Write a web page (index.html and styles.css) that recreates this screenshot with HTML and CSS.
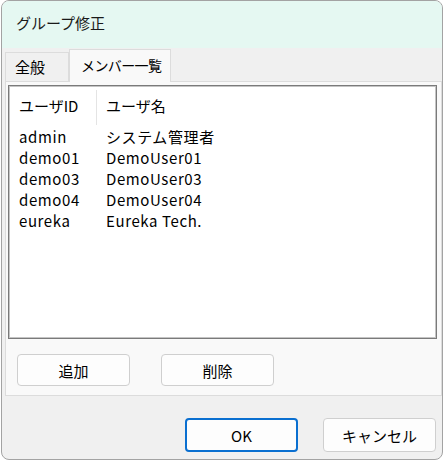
FILE: index.html
```html
<!DOCTYPE html>
<html lang="ja">
<head>
<meta charset="utf-8">
<link rel="stylesheet" href="styles.css">
</head>
<body>
<div class="window">
  <div class="titlebar">グループ修正</div>
  <div class="content">
    <div class="tabs">
      <div class="tab">全般</div>
      <div class="tab active">メンバー一覧</div>
    </div>
    <div class="tabpage">
      <div class="list">
        <div class="row head">
          <div class="c1">ユーザID</div>
          <div class="c2">ユーザ名</div>
        </div>
        <div class="row"><div class="c1">admin</div><div class="c2">システム管理者</div></div>
        <div class="row"><div class="c1">demo01</div><div class="c2">DemoUser01</div></div>
        <div class="row"><div class="c1">demo03</div><div class="c2">DemoUser03</div></div>
        <div class="row"><div class="c1">demo04</div><div class="c2">DemoUser04</div></div>
        <div class="row"><div class="c1">eureka</div><div class="c2">Eureka Tech.</div></div>
      </div>
      <div class="pagebtns">
        <button class="btn">追加</button>
        <button class="btn">削除</button>
      </div>
    </div>
    <div class="footer">
      <button class="btn primary">OK</button>
      <button class="btn">キャンセル</button>
    </div>
  </div>
</div>
</body>
</html>
```
FILE: styles.css
```css
html, body {
  margin: 0;
  padding: 0;
  background: #ffffff;
}
body {
  font-family: "Noto Sans CJK JP", "Noto Sans", sans-serif;
  font-size: 15px;
  color: #000;
}
.window {
  box-sizing: border-box;
  margin-left: 1px;
  width: 442px;
  height: 460px;
  border: 1px solid #a3a3a3;
  border-radius: 8px;
  background: #f0f0f0;
  overflow: hidden;
  display: flex;
  flex-direction: column;
}
.titlebar {
  height: 47px;
  background: #e5f8f2;
  padding-left: 14px;
  line-height: 44px;
  font-size: 15px;
  color: #1a1a1a;
  flex: none;
}
.content {
  padding: 1px 1px 0 3px;
  display: flex;
  flex-direction: column;
}
.tabs {
  display: flex;
  align-items: flex-end;
  height: 32px;
  position: relative;
  z-index: 1;
}
.tab {
  box-sizing: border-box;
  height: 29px;
  padding: 0 0 0 9px;
  border: 1px solid #dcdcdc;
  border-bottom: none;
  background: #f0f0f0;
  line-height: 28px;
  width: 64px;
  white-space: nowrap;
}
.tab.active {
  height: 33px;
  width: 102px;
  background: #f9f9f9;
  padding-left: 11px;
  margin-bottom: -1px;
  line-height: 30px;
  font-size: 14px;
  letter-spacing: -0.6px;
}
.tabpage {
  box-sizing: border-box;
  width: 437px;
  height: 315px;
  border: 1px solid #dcdcdc;
  background: #f9f9f9;
  padding: 3px 4px 0 2px;
}
.list {
  box-sizing: border-box;
  height: 254px;
  border: 1px solid #7a7a7a;
  box-shadow: inset 0 0 0 1px #c4c4c4;
  background: #fff;
  padding: 2px 2px 0 2px;
}
.row {
  display: flex;
  height: 21px;
  line-height: 21px;
  font-size: 15px;
  letter-spacing: 0.6px;
  white-space: nowrap;
}
.row.head {
  height: 38px;
  line-height: 36px;
  letter-spacing: 0;
}
.c1 {
  width: 86px;
  padding-left: 8px;
  box-sizing: border-box;
}
.c2 {
  padding-left: 9px;
}
.head .c1 {
  border-right: 1px solid #e4e4e4;
  margin-top: 2px;
  line-height: 32px;
  height: 35px;
}
.head .c2 {
  line-height: 36px;
}
.pagebtns {
  display: flex;
  gap: 31px;
  padding: 15px 0 0 9px;
}
.btn {
  box-sizing: border-box;
  width: 113px;
  height: 32px;
  border: 1px solid #cfcfcf;
  border-radius: 4px;
  background: #fdfdfd;
  font-family: "Noto Sans CJK JP", "Noto Sans", sans-serif;
  font-size: 15px;
  color: #000;
  padding: 0;
}
.footer {
  display: flex;
  justify-content: flex-end;
  gap: 25px;
  padding: 22px 5px 0 0;
}
.footer .btn {
  height: 34px;
}
.btn.primary {
  border: 2px solid #0a6fd0;
}
```
